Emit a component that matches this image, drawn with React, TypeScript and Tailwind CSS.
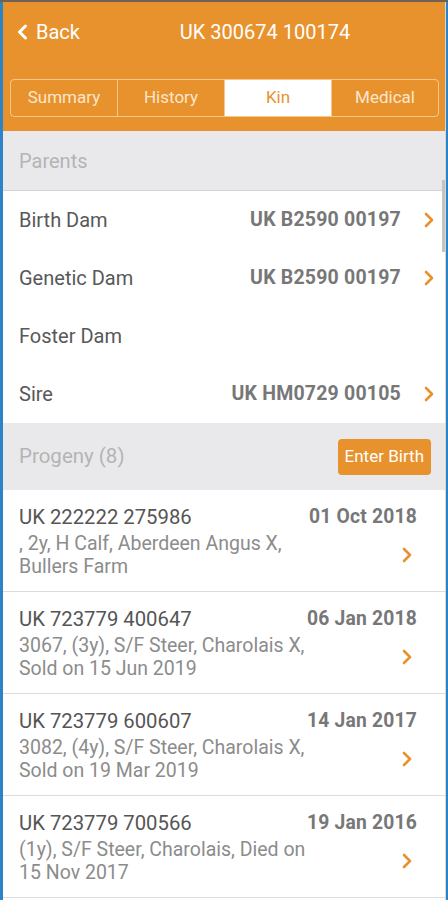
import React from 'react';

const ORANGE = '#e8922e';

const Chevron: React.FC<{ className?: string }> = ({ className }) => (
  <svg viewBox="0 0 10 16" className={className} fill="none">
    <path d="M2 2l6 6-6 6" stroke={ORANGE} strokeWidth="2.6" strokeLinecap="round" strokeLinejoin="round" />
  </svg>
);

const parents = [
  { label: 'Birth Dam', value: 'UK B2590 00197' },
  { label: 'Genetic Dam', value: 'UK B2590 00197' },
  { label: 'Foster Dam', value: '' },
  { label: 'Sire', value: 'UK HM0729 00105' },
];

const progeny = [
  { tag: 'UK 222222 275986', date: '01 Oct 2018', info: ', 2y, H Calf, Aberdeen Angus X, Bullers Farm' },
  { tag: 'UK 723779 400647', date: '06 Jan 2018', info: '3067, (3y), S/F Steer, Charolais X, Sold on 15 Jun 2019' },
  { tag: 'UK 723779 600607', date: '14 Jan 2017', info: '3082, (4y), S/F Steer, Charolais X, Sold on 19 Mar 2019' },
  { tag: 'UK 723779 700566', date: '19 Jan 2016', info: '(1y), S/F Steer, Charolais, Died on 15 Nov 2017' },
];

const tabs = ['Summary', 'History', 'Kin', 'Medical'];

export default function App() {
  return (
    <div className="w-[448px] h-[900px] overflow-hidden bg-[#2c83c6] flex flex-col font-['Roboto',sans-serif]">
      <div className="h-[2px] bg-[#6f6252]" />
      <div className="flex flex-1 min-h-0">
        <div className="w-[3px]" />
        <div className="relative flex-1 bg-white overflow-hidden">
          {/* Header */}
          <div className="bg-[#e8922e] h-[129px] flex flex-col">
            <div className="flex items-center h-[60px]">
              <div className="flex items-center pl-[14px] w-[77px] text-white text-[20px]">
                <svg viewBox="0 0 11 16" className="w-[11px] h-[16px] mr-[8px]" fill="none">
                  <path d="M8.5 2L2.5 8l6 6" stroke="white" strokeWidth="3" strokeLinecap="round" strokeLinejoin="round" />
                </svg>
                Back
              </div>
              <div className="flex-1 text-center text-white text-[20px] pl-[5px]">UK 300674 100174</div>
            </div>
            <div className="mt-[17px] ml-[7px] mr-[6px] flex h-[38px] border border-[#f5c98e] rounded-[4px] overflow-hidden">
              {tabs.map((t, i) => (
                <div
                  key={t}
                  className={`flex-1 flex items-center justify-center text-[17px] ${
                    i > 0 ? 'border-l border-[#f5c98e]' : ''
                  } ${t === 'Kin' ? 'bg-white text-[#e8922e]' : 'text-[#fbe6cc]'}`}
                >
                  {t}
                </div>
              ))}
            </div>
          </div>

          {/* Parents */}
          <div className="h-[60px] bg-[#e9e9eb] border-b border-[#d3d3d5] flex items-center pl-[16px] text-[20px] text-[#b4b4b6]">
            Parents
          </div>
          {parents.map((p) => (
            <div key={p.label} className="h-[58px] flex items-center pl-[16px] pr-[11px]">
              <div className="flex-1 text-[20px] text-[#585858]">{p.label}</div>
              {p.value && (
                <>
                  <div className="text-[19.5px] font-bold text-[#777777] tracking-[0.2px]">{p.value}</div>
                  <Chevron className="w-[10px] h-[16px] ml-[23px]" />
                </>
              )}
            </div>
          ))}

          {/* Progeny */}
          <div className="h-[67px] bg-[#e9e9eb] flex items-center justify-between pl-[16px] pr-[14px]">
            <span className="text-[20.5px] text-[#b4b4b6]">Progeny (8)</span>
            <button className="h-[36px] px-[7px] rounded-[4px] bg-[#e8922e] text-white text-[17px]">Enter Birth</button>
          </div>
          {progeny.map((p) => (
            <div key={p.tag} className="pt-[15px] pb-[13px] pl-[16px] pr-[28px] border-b border-[#dcdcdc]">
              <div className="flex justify-between items-center leading-6">
                <span className="text-[20.3px] text-[#555555]">{p.tag}</span>
                <span className="text-[19.3px] font-bold text-[#777777] tracking-[0.2px]">{p.date}</span>
              </div>
              <div className="mt-[3px] flex items-center justify-between">
                <div className="w-[296px] text-[19.5px] leading-[23px] text-[#8c8c8c]">{p.info}</div>
                <Chevron className="w-[10px] h-[16px] mr-[5px]" />
              </div>
            </div>
          ))}

          {/* scrollbar */}
          <div className="absolute right-0 top-[178px] w-[3px] h-[72px] bg-[#c4c4c4]" />
        </div>
        <div className="w-[1px] bg-[#d8d8d8]" />
        <div className="w-[2px]" />
      </div>
    </div>
  );
}
